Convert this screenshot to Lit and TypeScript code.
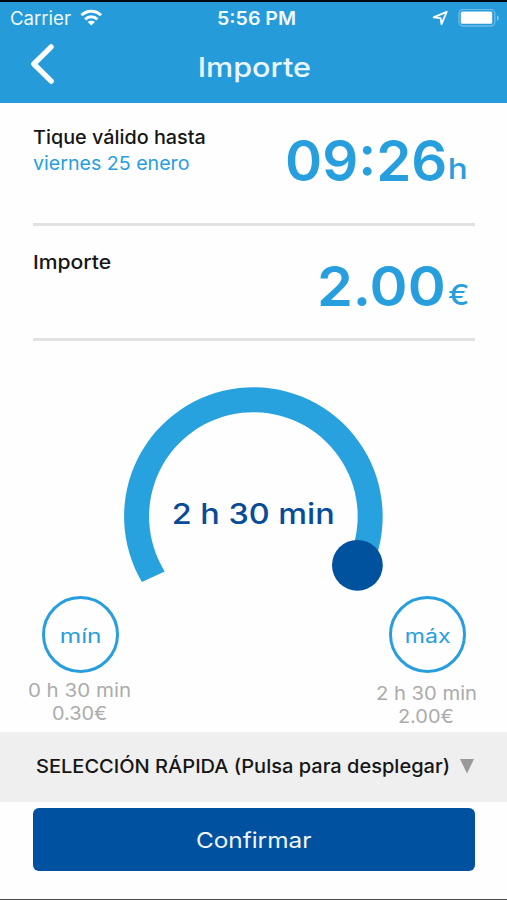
import { LitElement, html, css } from "lit";
import { customElement, property } from "lit/decorators.js";
import { styleMap } from "lit/directives/style-map.js";

const FAMILY = 'Inter, "Noto Sans", sans-serif';
const ruler = document.createElement("canvas").getContext("2d")!;

/** One line of text whose visible glyphs span exactly `width` pixels. */
@customElement("fit-text")
export class FitText extends LitElement {
  @property() text = "";
  @property({ type: Number }) size = 16;
  @property({ type: Number }) weight = 500;
  @property({ type: Number }) width = 100;

  static styles = css`
    :host {
      display: block;
      flex: none;
    }
    .box {
      display: block;
    }
    .line {
      display: block;
      width: max-content;
      white-space: pre;
      line-height: 1;
      font-family: Inter, "Noto Sans", sans-serif;
      transform-origin: 0 0;
    }
  `;

  render() {
    ruler.font = `${this.weight} ${this.size}px ${FAMILY}`;
    const m = ruler.measureText(this.text);
    const k = this.width / (m.actualBoundingBoxLeft + m.actualBoundingBoxRight);
    const box = { width: `${this.width}px` };
    const line = {
      fontSize: `${this.size}px`,
      fontWeight: String(this.weight),
      transform: `scaleX(${k}) translateX(${m.actualBoundingBoxLeft}px)`,
    };
    return html`<span class="box" style=${styleMap(box)}
      ><span class="line" style=${styleMap(line)}>${this.text}</span></span
    >`;
  }
}

@customElement("app-root")
export class AppRoot extends LitElement {
  static styles = css`
    :host {
      display: flex;
      flex-direction: column;
      box-sizing: border-box;
      width: 507px;
      height: 900px;
      overflow: hidden;
      background: #fefefe;
      border-bottom: 1.5px solid #4a4a4a;
      color: #161616;
    }
    header {
      flex: none;
      box-sizing: border-box;
      height: 102.5px;
      border-top: 2px solid #04090f;
      background: #269bda;
      color: #f3faff;
    }
    .status {
      display: grid;
      grid-template-columns: 207px 1fr auto;
      align-items: start;
      height: 40px;
      box-sizing: border-box;
      padding: 7px 7px 0 11px;
    }
    .group {
      display: flex;
      align-items: flex-start;
    }
    .wifi {
      margin: 0 0 0 9px;
    }
    .nav {
      display: flex;
      align-items: flex-start;
      padding-left: 29px;
    }
    .title {
      margin: 12px 0 0 142.5px;
      color: #eaf6ff;
    }
    svg {
      display: block;
      flex: none;
    }
    .row {
      flex: none;
      display: flex;
      justify-content: space-between;
      box-sizing: border-box;
      margin: 0 32px 0 33px;
      border-bottom: 3px solid #e2e2e1;
    }
    .valid {
      height: 123.5px;
      padding: 25px 9.5px 0 0;
    }
    .price {
      height: 115px;
      padding: 26px 7px 0 0;
    }
    .amount {
      margin: 1px 0 0 0.5px;
    }
    .day {
      margin-top: 7px;
    }
    .blue {
      color: #279edd;
    }
    .value {
      display: flex;
      align-items: flex-start;
      margin-top: 6px;
      gap: 5px;
      color: #279edd;
    }
    .valid .value {
      margin-top: 5px;
    }
    .valid .unit {
      margin-top: 21px;
    }
    .price .unit {
      margin-top: 23px;
    }
    .dial {
      flex: none;
      display: grid;
      justify-items: center;
      width: 260px;
      height: 208.5px;
      margin: 46px 0 0 123px;
    }
    .dial > * {
      grid-area: 1 / 1;
    }
    .reading {
      margin: 112px 0 0 1px;
      color: #084c98;
    }
    .limits {
      flex: none;
      display: flex;
      justify-content: space-between;
      height: 136.5px;
      padding: 0 31px 0 29px;
      color: #ababab;
    }
    .limit {
      display: flex;
      flex-direction: column;
      align-items: center;
    }
    .ring {
      box-sizing: border-box;
      width: 77.5px;
      height: 77.5px;
      margin-left: 2px;
      border: 3px solid #279edd;
      border-radius: 50%;
      display: flex;
      justify-content: center;
      padding-top: 28px;
      color: #279edd;
    }
    .span {
      margin-top: 8px;
    }
    .cost {
      margin-top: 4px;
    }
    .lower .span {
      margin-top: 11px;
    }
    .quick {
      flex: none;
      display: flex;
      align-items: flex-start;
      box-sizing: border-box;
      height: 70px;
      padding: 25px 0 0 36px;
      background: #efefef;
    }
    .arrow {
      margin: 1.5px 0 0 11px;
    }
    .confirm {
      flex: none;
      display: flex;
      justify-content: center;
      box-sizing: border-box;
      height: 63px;
      margin: 5.5px 32px 0 33px;
      padding: 21px 0 0;
      border: 0;
      border-radius: 6px;
      background: #0052a0;
      color: #eef6ff;
    }
  `;

  render() {
    return html`
      <header>
        <div class="status">
          <div class="group">
            <fit-text text="Carrier" size="18.5" weight="400" width="60"></fit-text>
            <svg class="wifi" width="24" height="18" viewBox="0 0 24 18" fill="none" stroke="#fff" stroke-width="3">
              <path d="M1.500 6.300C7 .9 15.500 .9 21 6.300" />
              <path d="M5.100 10.300c3.500-3.300 8.800-3.300 12.300 0" />
              <path d="M11.300 16.600l-3.600-3.500c2-1.800 5.200-1.800 7.200 0z" fill="#fff" stroke="none" />
            </svg>
          </div>
          <fit-text text="5:56 PM" size="18.5" weight="600" width="77"></fit-text>
          <div class="group">
            <svg width="26" height="18" viewBox="0 0 26 18" fill="none" stroke="#fff" stroke-width="1.8" stroke-linejoin="round">
              <path d="M1.600 8.400L14.700 2.800L9.500 15.200L8.600 9.200Z" />
            </svg>
            <svg width="42" height="20" viewBox="0 0 42 20">
              <rect x=".9" y=".4" width="36" height="16.600" rx="4.500" fill="none" stroke="#6fbdea" stroke-width="1.300" />
              <rect x="2.800" y="2.600" width="31.400" height="12.200" rx="1.500" fill="#fff" />
              <path d="M39 6.200c2.300.8 2.300 4.800 0 5.600z" fill="#83c9f0" />
            </svg>
          </div>
        </div>
        <div class="nav">
          <svg width="28" height="44" viewBox="0 0 28 44" fill="none" stroke="#fff" stroke-width="5.300" stroke-linecap="round" stroke-linejoin="round">
            <path d="M22.200 4.800L4.800 22L22.200 39.200" />
          </svg>
          <fit-text class="title" text="Importe" size="27" weight="500" width="110"></fit-text>
        </div>
      </header>

      <section class="row valid">
        <div>
          <fit-text text="Tique válido hasta" size="19" weight="450" width="172"></fit-text>
          <fit-text class="day blue" text="viernes 25 enero" size="19" weight="400" width="156"></fit-text>
        </div>
        <div class="value">
          <fit-text text="09:26" size="56" weight="600" width="157.500"></fit-text>
          <fit-text class="unit" text="h" size="29" weight="550" width="16"></fit-text>
        </div>
      </section>

      <section class="row price">
        <fit-text class="amount" text="Importe" size="19" weight="450" width="77"></fit-text>
        <div class="value">
          <fit-text text="2.00" size="55.5" weight="600" width="123"></fit-text>
          <fit-text class="unit" text="€" size="28" weight="550" width="20.500"></fit-text>
        </div>
      </section>

      <div class="dial">
        <svg width="260" height="208" viewBox="0 0 260 208">
          <path d="M18.900 195A129.300 129.300 0 1 1 253.500 169L228.800 164A104.300 104.300 0 1 0 41.700 184.400Z" fill="#28a1df" />
          <circle cx="234.400" cy="178.300" r="25.400" fill="#00529f" />
        </svg>
        <fit-text class="reading" text="2 h 30 min" size="29" weight="550" width="159"></fit-text>
      </div>

      <div class="limits">
        <div class="limit">
          <div class="ring"><fit-text text="mín" size="19" weight="400" width="39"></fit-text></div>
          <fit-text class="span" text="0 h 30 min" size="18.5" weight="400" width="101"></fit-text>
          <fit-text class="cost" text="0.30€" size="18.5" weight="400" width="54"></fit-text>
        </div>
        <div class="limit lower">
          <div class="ring"><fit-text text="máx" size="19" weight="400" width="44"></fit-text></div>
          <fit-text class="span" text="2 h 30 min" size="18.5" weight="400" width="99"></fit-text>
          <fit-text class="cost" text="2.00€" size="18.5" weight="400" width="54.500"></fit-text>
        </div>
      </div>

      <div class="quick">
        <fit-text text="SELECCIÓN RÁPIDA (Pulsa para desplegar)" size="19" weight="450" width="413"></fit-text>
        <svg class="arrow" width="14" height="15" viewBox="0 0 14 15"><path d="M0 0H14L7 14.500Z" fill="#999" /></svg>
      </div>

      <button class="confirm">
        <fit-text text="Confirmar" size="22" weight="400" width="114"></fit-text>
      </button>
    `;
  }
}
